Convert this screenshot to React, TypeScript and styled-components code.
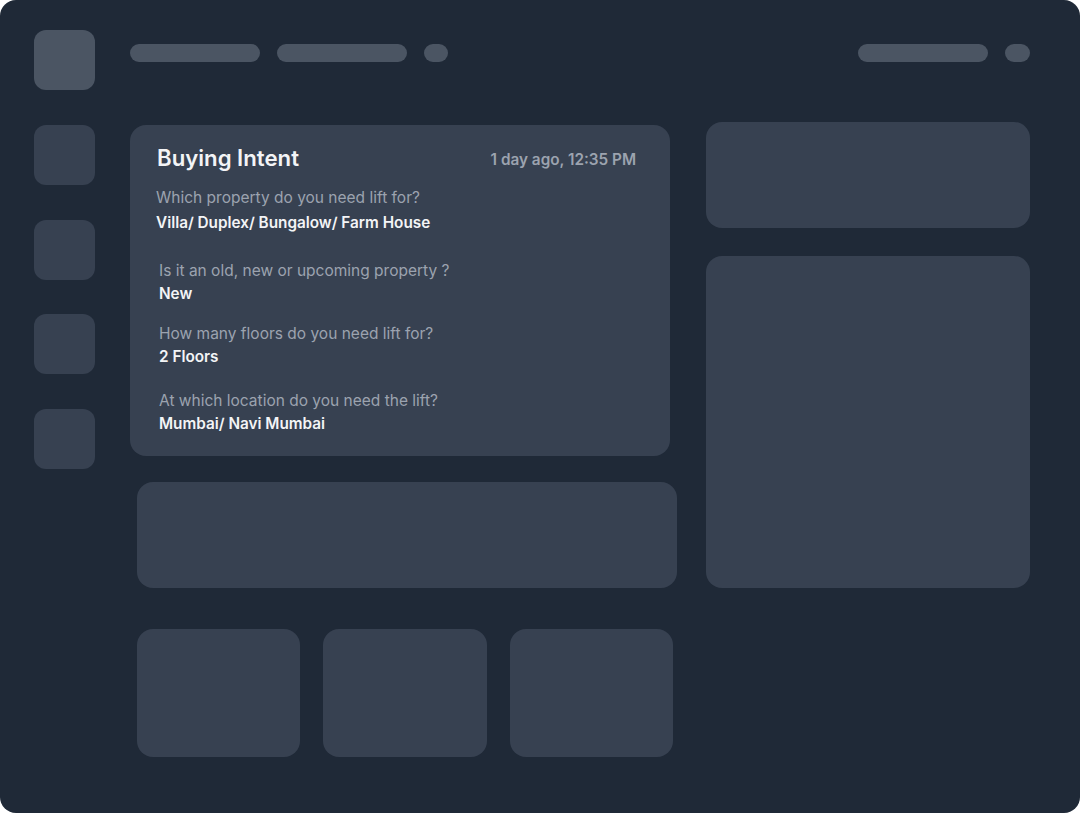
import React from 'react';
import styled, { createGlobalStyle } from 'styled-components';

const GlobalStyle = createGlobalStyle`
  html, body {
    margin: 0;
    padding: 0;
    background: #ffffff;
  }
  * {
    box-sizing: border-box;
  }
`;

const Frame = styled.div`
  width: 1080px;
  height: 813px;
  background: #1f2937;
  border-radius: 16px;
  padding: 30px 50px 0 34px;
  display: flex;
  flex-direction: column;
  font-family: 'Inter', 'Noto Sans', sans-serif;
  overflow: hidden;
`;

const Header = styled.div`
  display: flex;
  align-items: flex-start;
  height: 60px;
`;

const Logo = styled.div`
  width: 61px;
  height: 60px;
  border-radius: 12px;
  background: #4b5563;
`;

const NavGroup = styled.div<{ $right?: boolean }>`
  display: flex;
  align-items: center;
  gap: 17px;
  margin-top: 14px;
  margin-left: ${(p) => (p.$right ? 'auto' : '35px')};
`;

const Pill = styled.div<{ $w: number }>`
  width: ${(p) => p.$w}px;
  height: 18px;
  border-radius: 9px;
  background: #4b5563;
`;

const Body = styled.div`
  display: flex;
  margin-top: 32px;
`;

const Sidebar = styled.div`
  display: flex;
  flex-direction: column;
  gap: 34.5px;
  margin-top: 3px;
  width: 61px;
`;

const SideTile = styled.div`
  width: 61px;
  height: 60px;
  border-radius: 12px;
  background: #374151;
`;

const MainCol = styled.div`
  display: flex;
  flex-direction: column;
  margin-left: 35px;
  margin-top: 3px;
  width: 547px;
`;

const IntentCard = styled.div`
  width: 540px;
  height: 331px;
  background: #374151;
  border-radius: 16px;
  padding: 19px 34px 0 27px;
`;

const CardHead = styled.div`
  display: flex;
  justify-content: space-between;
  align-items: center;
  height: 28px;
`;

const Title = styled.div`
  font-size: 22.2px;
  font-weight: 600;
  color: #f3f4f6;
  line-height: 28px;
`;

const Stamp = styled.div`
  font-size: 15.3px;
  font-weight: 600;
  color: #9ca3af;
  line-height: 20px;
  margin-top: 4px;
`;

const QA = styled.div<{ $top: number; $indent?: number; $gap?: number }>`
  margin-top: ${(p) => p.$top}px;
  margin-left: ${(p) => p.$indent ?? 0}px;
  display: flex;
  flex-direction: column;
  gap: ${(p) => p.$gap ?? 3}px;
`;

const Question = styled.div`
  font-size: 15.5px;
  font-weight: 400;
  color: #9ca3af;
  line-height: 20px;
`;

const Answer = styled.div`
  font-size: 15.3px;
  font-weight: 600;
  color: #f3f4f6;
  line-height: 20px;
`;

const Panel = styled.div<{ $w: number; $h: number }>`
  width: ${(p) => p.$w}px;
  height: ${(p) => p.$h}px;
  background: #374151;
  border-radius: 16px;
`;

const WideSlot = styled.div`
  margin: 26px 0 0 7px;
`;

const TileRow = styled.div`
  display: flex;
  gap: 23px;
  margin: 41px 0 0 7px;
`;

const RightCol = styled.div`
  display: flex;
  flex-direction: column;
  gap: 28px;
  margin-left: 29px;
`;

const questions = [
  { q: 'Which property do you need lift for?', a: 'Villa/ Duplex/ Bungalow/ Farm House', top: 16, indent: -1, gap: 5 },
  { q: 'Is it an old, new or upcoming property ?', a: 'New', top: 28, indent: 2, gap: 3 },
  { q: 'How many floors do you need lift for?', a: '2 Floors', top: 20, indent: 2, gap: 3 },
  { q: 'At which location do you need the lift?', a: 'Mumbai/ Navi Mumbai', top: 24, indent: 2, gap: 3 },
];

export default function App() {
  return (
    <>
      <GlobalStyle />
      <Frame>
        <Header>
          <Logo />
          <NavGroup>
            <Pill $w={130} />
            <Pill $w={130} />
            <Pill $w={24} />
          </NavGroup>
          <NavGroup $right>
            <Pill $w={130} />
            <Pill $w={25} />
          </NavGroup>
        </Header>
        <Body>
          <Sidebar>
            <SideTile />
            <SideTile />
            <SideTile />
            <SideTile />
          </Sidebar>
          <MainCol>
            <IntentCard>
              <CardHead>
                <Title>Buying Intent</Title>
                <Stamp>1 day ago, 12:35 PM</Stamp>
              </CardHead>
              {questions.map((item) => (
                <QA key={item.q} $top={item.top} $indent={item.indent} $gap={item.gap}>
                  <Question>{item.q}</Question>
                  <Answer>{item.a}</Answer>
                </QA>
              ))}
            </IntentCard>
            <WideSlot>
              <Panel $w={540} $h={106} />
            </WideSlot>
            <TileRow>
              <Panel $w={163} $h={128} />
              <Panel $w={164} $h={128} />
              <Panel $w={163} $h={128} />
            </TileRow>
          </MainCol>
          <RightCol>
            <Panel $w={324} $h={106} />
            <Panel $w={324} $h={332} />
          </RightCol>
        </Body>
      </Frame>
    </>
  );
}
